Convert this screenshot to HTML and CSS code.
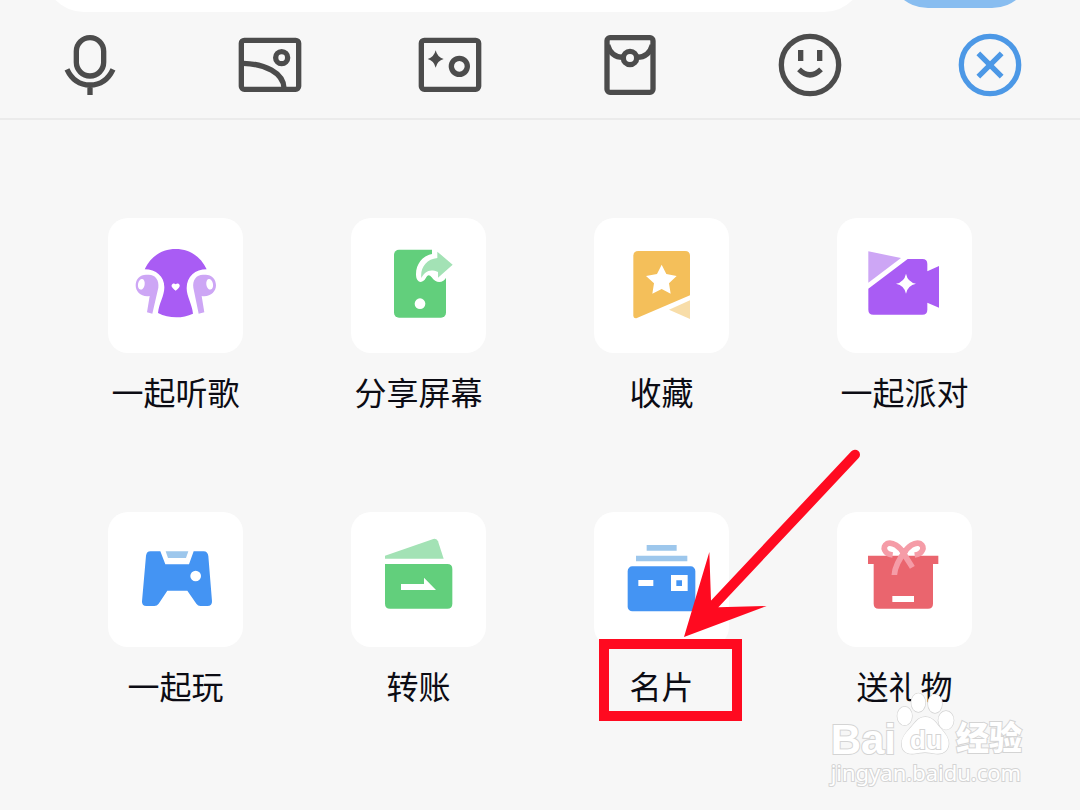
FILE: index.html
```html
<!DOCTYPE html>
<html lang="zh-CN">
<head>
    <meta charset="UTF-8">
    <meta name="viewport" content="width=device-width, initial-scale=1.0">
    <title>聊天功能面板</title>

    <link rel="stylesheet" href="styles.css">
</head>
<body>
    <form class="composer">
        <input type="text" class="message" aria-label="消息">
        <button type="button" class="send" aria-label="发送"></button>
    </form>

    <nav class="toolbar">
        <button type="button" aria-label="语音">
            <svg viewBox="162 88 216 216">
                <rect x="229" y="114" width="82" height="115" rx="41"/>
                <path d="M201 209C216 241 240 256 270 256S324 241 339 209M270 256V286"/>
            </svg>
        </button>
        <button type="button" aria-label="图片">
            <svg viewBox="702 88 216 216">
                <rect x="724" y="122" width="172" height="147" rx="9"/>
                <circle cx="845" cy="174" r="18"/>
                <path d="M730 191C795 193 850 219 852 265"/>
            </svg>
        </button>
        <button type="button" aria-label="拍照">
            <svg viewBox="162 88 216 216">
                <rect x="184" y="122" width="172" height="147" rx="9"/>
                <circle cx="298" cy="200" r="24"/>
                <path class="solid" d="M227 152Q232 173 251 178Q232 183 227 204Q222 183 203 178Q222 173 227 152Z"/>
            </svg>
        </button>
        <button type="button" aria-label="红包">
            <svg viewBox="702 88 216 216">
                <rect x="741" y="114" width="138" height="164" rx="9"/>
                <circle cx="810" cy="175" r="20"/>
                <path d="M743 136C749 158 764 173 789 173M877 136C871 158 856 173 831 173"/>
            </svg>
        </button>
        <button type="button" aria-label="表情">
            <svg viewBox="162 88 216 216">
                <circle cx="270" cy="196" r="86"/>
                <path d="M242 151V184M299 151V184M237 209Q270 242 303 209"/>
            </svg>
        </button>
        <button type="button" class="close" aria-label="关闭">
            <svg viewBox="702 88 216 216">
                <circle cx="810" cy="196" r="86"/>
                <path d="M775 161L845 231M845 161L775 231"/>
            </svg>
        </button>
    </nav>

    <main class="panel">
        <button type="button" class="item">
            <svg class="tile" viewBox="24 24 405 405">
                <path class="purple" d="M134 178C151 140 185 117 227 117S303 140 320 178C286 178 260 199 260 235C260 259 276 282 279 311C247 326 207 326 174 309C177 280 193 258 193 232C193 199 168 178 134 178Z"/>
                <path class="purple-light" d="M138 194H146C166 194 178 210 175 233L157 311L141 307L149 258C124 262 107 246 107 226C107 207 120 194 138 194ZM317 194H309C289 194 277 210 280 233L296 311L313 307L305 258C330 262 348 246 348 226C348 207 335 194 317 194Z"/>
                <ellipse class="white" cx="124" cy="223" rx="10" ry="16" transform="rotate(10 124 223)"/>
                <ellipse class="white" cx="329" cy="223" rx="10" ry="16" transform="rotate(-10 329 223)"/>
                <path class="white" d="M227 242C216 233 214 230 215 225C217 219 224 219 227 223C230 219 237 219 239 225C240 230 237 234 227 242Z"/>
            </svg>
            <span>一起听歌</span>
        </button>
        <button type="button" class="item">
            <svg class="tile" viewBox="24 24 405 405">
                <rect class="green" x="153" y="119" width="156" height="204" rx="15"/>
                <path class="white" d="M267 115V132C238 138 219 162 219 193C219 222 241 220 248 205C254 193 259 193 266 202C278 222 302 220 310 202L316 192V115Z"/>
                <path class="green-light" d="M283 125L329 164L285 203V186C258 176 247 185 235 204C231 174 250 147 283 144Z"/>
                <circle class="white" cx="231" cy="281" r="16"/>
            </svg>
            <span>分享屏幕</span>
        </button>
        <button type="button" class="item">
            <svg class="tile" viewBox="24 24 405 405">
                <path class="yellow" d="M157 123H297Q312 123 312 138V256L151 325Q142 326 142 316V138Q142 123 157 123Z"/>
                <path class="yellow-light" d="M312 271V327L249 299Z"/>
                <path class="white" d="M227 164L241 192L272 198L249 220L254 251L227 237L199 251L204 220L180 198L213 192Z"/>
            </svg>
            <span>收藏</span>
        </button>
        <button type="button" class="item">
            <svg class="tile" viewBox="24 24 405 405">
                <path class="purple-light" d="M118 124L216 144L118 218Z"/>
                <path class="purple" d="M236 147H280Q295 147 295 162V184L330 168V293L295 278V299Q295 314 280 314H133Q118 314 118 299V236Z"/>
                <path class="white" d="M231 191Q236 216 261 221Q236 226 231 251Q226 226 201 221Q226 216 231 191Z"/>
            </svg>
            <span>一起派对</span>
        </button>
        <button type="button" class="item">
            <svg class="tile" viewBox="24 24 405 405">
                <path class="blue" d="M151 142H181L196 181H267L281 142H311Q323 142 325 156L336 291Q337 306 322 306H301Q294 306 289 299L262 260H202L176 299Q171 306 163 306H139Q125 306 126 292L138 155Q140 142 151 142Z"/>
                <path class="blue-light" d="M197 142H265L258 162H204Z"/>
                <circle class="white" cx="287" cy="216" r="16"/>
            </svg>
            <span>一起玩</span>
        </button>
        <button type="button" class="item">
            <svg class="tile" viewBox="24 24 405 405">
                <path class="green-light" d="M126 155L271 105Q281 102 285 112L302 164H126Z"/>
                <path class="green" d="M126 180H313Q328 180 328 195V299Q328 314 313 314H141Q126 314 126 299Z"/>
                <path class="white" d="M174 240H243V221L279 258H174Z"/>
            </svg>
            <span>转账</span>
        </button>
        <button type="button" class="item">
            <svg class="tile" viewBox="42 216 405 405">
                <path class="blue-light" d="M200 315H290V332H200ZM168 347H322V364H168Z"/>
                <rect class="blue" x="143" y="379" width="203" height="135" rx="14"/>
                <path class="white" d="M175 420H220V438H175ZM273 405H323V453H273Z"/>
                <path class="blue" d="M289 421H306V438H289Z"/>
            </svg>
            <span>名片</span>
            <i class="highlight"></i>
            <svg class="arrow" viewBox="306 24 540 570">
                <path class="shaft" d="M825 44L400 496"/>
                <path d="M312 591L388 336L393 482L415 502L560 498Z"/>
            </svg>
        </button>
        <button type="button" class="item">
            <svg class="tile" viewBox="24 24 405 405">
                <path class="red" d="M117 155H328V180H312V299Q312 314 297 314H149Q134 314 134 299V180H117Z"/>
                <path class="ribbon" d="M226 151C213 127 190 112 174 119C158 128 166 150 191 153M223 151C235 127 258 112 274 119C290 128 281 150 257 153"/>
                <path class="ribbon" d="M219 138C229 159 241 175 250 190M231 138C210 165 197 188 196 213"/>
                <path class="white" d="M190 276H255V294H190Z"/>
            </svg>
            <span>送礼物</span>
        </button>
    </main>

    <div class="watermark">
        <div class="brand">
            <span class="bai">Bai</span>
            <span class="paw">
                <svg viewBox="280 10 180 195">
                    <ellipse cx="306" cy="85" rx="22" ry="28"/>
                    <ellipse cx="347" cy="45" rx="21" ry="28"/>
                    <ellipse cx="397" cy="48" rx="21" ry="28"/>
                    <ellipse cx="430" cy="98" rx="23" ry="28"/>
                    <path d="M368 88C391 88 401 107 414 122C430 140 439 153 438 169C436 190 421 200 400 198C386 197 377 194 367 194C357 194 348 197 334 198C312 200 297 190 297 168C297 151 307 138 322 122C336 108 345 88 368 88Z"/>
                </svg>
                <span class="du">du</span>
            </span>
            <span class="jingyan">经验</span>
        </div>
        <div class="url">jingyan.baidu.com</div>
    </div>
</body>
</html>
```
FILE: styles.css
```css
* {
    margin: 0;
    padding: 0;
    box-sizing: border-box;
}

body {
    font-family: 'Noto Sans CJK SC', sans-serif;
    background-color: #f7f7f7;
    color: #0c0c14;
    min-height: 100vh;
    position: relative;
}

button {
    font: inherit;
    color: inherit;
    border: none;
    background: none;
    cursor: pointer;
}

svg {
    display: block;
}

/* Only the lower edge of the message row shows */
.composer {
    display: flex;
    align-items: flex-end;
    gap: 24px;
    height: 12px;
    padding: 0 48px 0 44px;
    overflow: hidden;
}

.message {
    flex: 1;
    min-width: 0;
    height: 80px;
    padding: 0 24px;
    border: none;
    border-radius: 40px;
    background-color: #fff;
}

.send {
    width: 144px;
    height: 80px;
    margin-bottom: 4px;
    border-radius: 40px;
    background-color: #88bdf0;
}

.toolbar {
    display: grid;
    grid-template-columns: repeat(6, 1fr);
    border-bottom: 2px solid #ebebeb;
}

.toolbar button {
    display: flex;
    justify-content: center;
    padding: 17px 0;
}

.toolbar svg {
    width: 72px;
    height: 72px;
    fill: none;
    stroke: #4c4c4c;
    stroke-width: 16;
}

.toolbar .solid {
    fill: #4c4c4c;
    stroke: none;
}

.toolbar .close svg {
    stroke: #4c98e6;
}

.panel {
    display: grid;
    grid-template-columns: repeat(4, 1fr);
    justify-items: center;
    row-gap: 97px;
    padding: 98px 5% 40px;
}

.item {
    position: relative;
    width: 135px;
    font-size: 32px;
    line-height: 48px;
}

.item > span {
    display: block;
    margin-top: 14px;
    white-space: nowrap;
}

.tile {
    width: 135px;
    height: 135px;
    border-radius: 20px;
    background-color: #fff;
}

.white { fill: #fff; }
.purple { fill: #a95cf4; }
.purple-light { fill: #cda6f5; }
.green { fill: #62cf7c; }
.green-light { fill: #a3e2b5; }
.yellow { fill: #f4bf5a; }
.yellow-light { fill: #f8dda8; }
.blue { fill: #4494f3; }
.blue-light { fill: #9dc7ec; }
.red { fill: #ea656e; }

.ribbon {
    fill: none;
    stroke: #f59ca7;
    stroke-width: 17;
}

.highlight {
    position: absolute;
    top: 127px;
    left: 5px;
    width: 143px;
    height: 82px;
    border: 10px solid #ff0a20;
}

.arrow {
    position: absolute;
    top: -64px;
    left: 88px;
    width: 180px;
    height: 190px;
    fill: #ff0a20;
    pointer-events: none;
}

.shaft {
    stroke: #ff0a20;
    stroke-width: 30;
    stroke-linecap: round;
}

.watermark {
    position: absolute;
    right: 58px;
    bottom: 22px;
    color: #fff;
    -webkit-text-stroke: 2px #d4d4d4;
    paint-order: stroke fill;
    pointer-events: none;
}

.brand {
    display: flex;
    align-items: flex-end;
    height: 64px;
    font-family: 'Liberation Sans', sans-serif;
    font-weight: bold;
    line-height: 40px;
}

.bai {
    font-size: 42px;
    line-height: 32px;
}

.paw {
    position: relative;
}

.paw svg {
    width: 60px;
    height: 65px;
    fill: #fff;
    stroke: #d4d4d4;
    stroke-width: 4;
}

.du {
    position: absolute;
    right: 0;
    bottom: 0;
    left: 0;
    font-size: 26px;
    line-height: 32px;
    text-align: center;
}

.jingyan {
    font-family: 'Noto Sans CJK SC', sans-serif;
    font-size: 33px;
    font-weight: 900;
}

.url {
    font-family: 'Noto Sans', sans-serif;
    font-size: 22px;
    line-height: 32px;
}
```
